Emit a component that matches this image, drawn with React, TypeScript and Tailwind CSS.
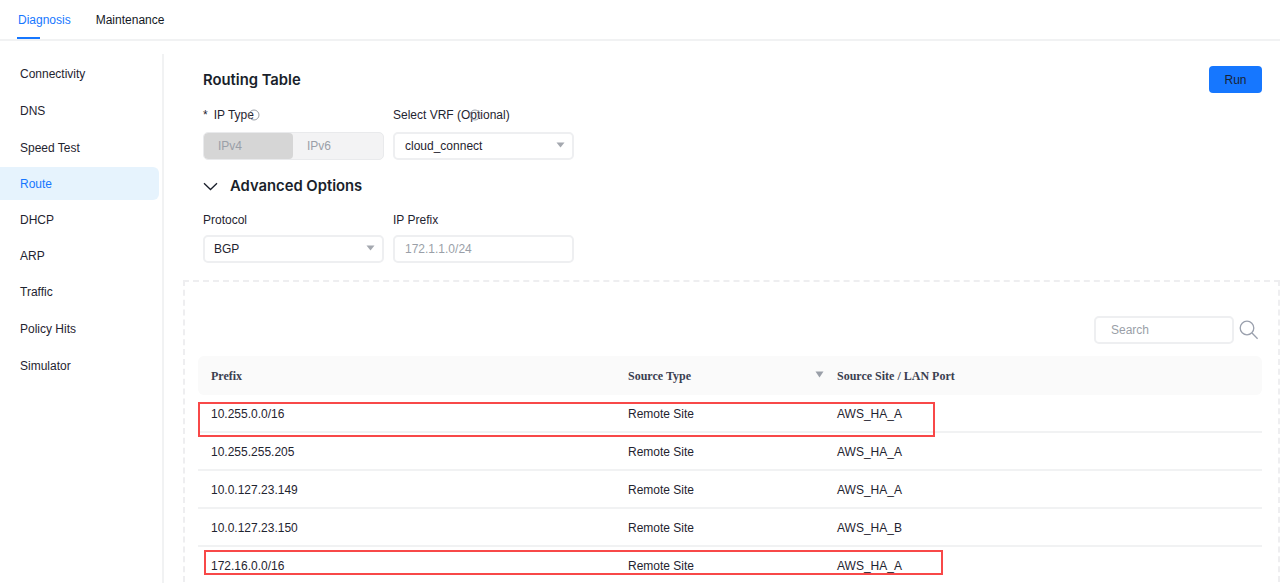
import React from "react";

const menu = ["Connectivity", "DNS", "Speed Test", "Route", "DHCP", "ARP", "Traffic", "Policy Hits", "Simulator"];
const rows = [
  ["10.255.0.0/16", "Remote Site", "AWS_HA_A"],
  ["10.255.255.205", "Remote Site", "AWS_HA_A"],
  ["10.0.127.23.149", "Remote Site", "AWS_HA_A"],
  ["10.0.127.23.150", "Remote Site", "AWS_HA_B"],
  ["172.16.0.0/16", "Remote Site", "AWS_HA_A"],
];

function Caret({ className }: { className: string }) {
  return (
    <svg width="9" height="6" viewBox="0 0 9 6" preserveAspectRatio="none" className={className}>
      <path d="M0.5 0.5h8L4.5 5.5z" fill="currentColor" />
    </svg>
  );
}

function Info({ className }: { className: string }) {
  return (
    <svg width="12" height="12" viewBox="0 0 12 12" className={className}>
      <circle cx="6" cy="6" r="5" fill="none" stroke="#8f959e" strokeWidth="0.9" />
    </svg>
  );
}

function Field({ label, gap, children }: { label: React.ReactNode; gap: string; children: React.ReactNode }) {
  return (
    <div className="w-[180.5px]">
      <div className="relative h-[18px] text-[12px] leading-[18px] text-[#1f2430]">{label}</div>
      <div className={gap}>{children}</div>
    </div>
  );
}

function Box({ children }: { children: React.ReactNode }) {
  return (
    <div className="flex h-[28px] w-full items-center justify-between rounded-[5px] border-2 border-[#eeeff1] bg-white pl-[10px] pr-[7px] text-[12px] text-[#1f2430]">
      {children}
    </div>
  );
}

export default function App() {
  return (
    <div className="h-[583px] w-[1280px] overflow-hidden bg-white font-['Liberation_Sans',sans-serif]">
      <div className="flex h-[41px] gap-[25px] border-b-2 border-[#f1f2f3] pl-[17px] text-[12px]">
        <div className="relative pl-px pt-[11px] leading-[18px] text-[#1677ff]">
          Diagnosis
          <div className="absolute bottom-0 left-0 h-[2px] w-[23px] bg-[#1677ff]" />
        </div>
        <div className="pt-[11px] leading-[18px] text-[#14181f]">Maintenance</div>
      </div>
      <div className="flex h-[542px]">
        <aside className="mt-[13px] h-[529px] w-[164px] shrink-0 border-r-2 border-[#f1f2f3] pt-px">
          <div className="flex w-[159px] flex-col">
            {menu.map((m) => (
              <div
                key={m}
                className={`flex items-center pl-[20px] text-[12px] ${
                  m === "Route"
                    ? "mb-[2px] mt-px h-[33px] rounded-r-[6px] bg-[#e6f3fd] text-[#1677ff]"
                    : "h-[37px] text-[#1f2430]"
                } ${["DHCP", "ARP", "Traffic"].includes(m) ? "!h-[36px]" : ""}`}
              >
                {m}
              </div>
            ))}
          </div>
        </aside>
        <main className="relative flex-1 pl-[19px]">
          <div className="flex items-start justify-between pl-[20px] pr-[18px] pt-[25px]">
            <h1 className="h-[28px] font-['Inter',sans-serif] text-[14.8px] font-semibold leading-[28px] text-[#1a1f2b]">
              Routing Table
            </h1>
            <button className="h-[27px] w-[53px] rounded-[4px] bg-[#1677ff] text-[12px] text-[#1a2333]">Run</button>
          </div>
          <div className="flex gap-[9.5px] pl-[20px] pt-[12px]">
            <Field
              gap="mt-[8px]"
              label={
                <>
                  <span className="mr-[6px]">*</span>IP Type
                  <Info className="absolute left-[45px] top-[3px]" />
                </>
              }
            >
              <div className="flex h-[28px] w-full overflow-hidden rounded-[5px] border border-[#e9eaec] bg-[#f3f3f4] text-[12px] text-[#9a9fa8]">
                <div className="flex w-[89px] items-center rounded-[4px] bg-[#d6d6d6] pl-[14px]">IPv4</div>
                <div className="flex flex-1 items-center pl-[14px]">IPv6</div>
              </div>
            </Field>
            <Field
              gap="mt-[8px]"
              label={
                <>
                  Select VRF (Optional)
                  <Info className="absolute left-[76px] top-[3px]" />
                </>
              }
            >
              <Box>
                cloud_connect
                <Caret className="-mt-[3px] text-[#a4a8af]" />
              </Box>
            </Field>
          </div>
          <div className="mt-[12px] flex h-[28px] items-center pl-[20px]">
            <svg width="15" height="9" viewBox="0 0 15 9" className="mt-px text-[#1a1f2b]">
              <path d="M1 1.2L7.5 7.5L14 1.2" fill="none" stroke="currentColor" strokeWidth="1.3" />
            </svg>
            <span className="ml-[12px] font-['Inter',sans-serif] text-[14.8px] font-semibold text-[#1a1f2b]">
              Advanced Options
            </span>
          </div>
          <div className="flex gap-[9.5px] pl-[20px] pt-[11px]">
            <Field gap="mt-[6px]" label="Protocol">
              <Box>
                <span className="-ml-px">BGP</span>
                <Caret className="-mt-[3px] text-[#a4a8af]" />
              </Box>
            </Field>
            <Field gap="mt-[6px]" label="IP Prefix">
              <Box>
                <span className="text-[#9a9fa8]">172.1.1.0/24</span>
              </Box>
            </Field>
          </div>
          <section className="relative mt-[17px] h-[302px] w-[1097px] border-x-2 border-t-2 border-dashed border-[#eeeef0] pl-[13px] pr-[15px] pt-[34px]">
            <div className="flex items-center justify-end gap-[5px] pr-[4px]">
              <div className="flex h-[28px] w-[140px] items-center rounded-[5px] border-2 border-[#eeeff1] pl-[15px] text-[12px] text-[#9a9fa8]">
                Search
              </div>
              <svg width="20" height="20" viewBox="0 0 20 20" className="text-[#9aa0ad]">
                <circle cx="8" cy="8" r="6.8" fill="none" stroke="currentColor" strokeWidth="1.3" />
                <path d="M13 13L18.6 18.8" fill="none" stroke="currentColor" strokeWidth="1.3" />
              </svg>
            </div>
            <div className="mt-[12px] w-[1064px]">
              <div className="relative flex h-[39px] items-center rounded-[6px] bg-[#fafafa] pl-[13px] font-['Liberation_Serif',serif] text-[12px] font-bold text-[#3a4050]">
                <div className="w-[417px]">Prefix</div>
                <div className="w-[209px]">Source Type</div>
                <div>Source Site / LAN Port</div>
                <Caret className="absolute left-[617px] top-[15px] h-[7px] w-[9px] text-[#9a9fa8]" />
              </div>
              {rows.map((r) => (
                <div
                  key={r[0]}
                  className="flex h-[38px] items-center border-b-2 border-[#f1f2f3] pl-[13px] pt-[2px] text-[12px] text-[#1f2430]"
                >
                  <div className="w-[417px]">{r[0]}</div>
                  <div className="w-[209px]">{r[1]}</div>
                  <div>{r[2]}</div>
                </div>
              ))}
            </div>
            <div className="absolute left-[13px] top-[120px] h-[35px] w-[737px] border-2 border-[#f84848]" />
            <div className="absolute left-[19px] top-[268px] h-[25px] w-[739px] border-2 border-[#f84848]" />
          </section>
        </main>
      </div>
    </div>
  );
}
